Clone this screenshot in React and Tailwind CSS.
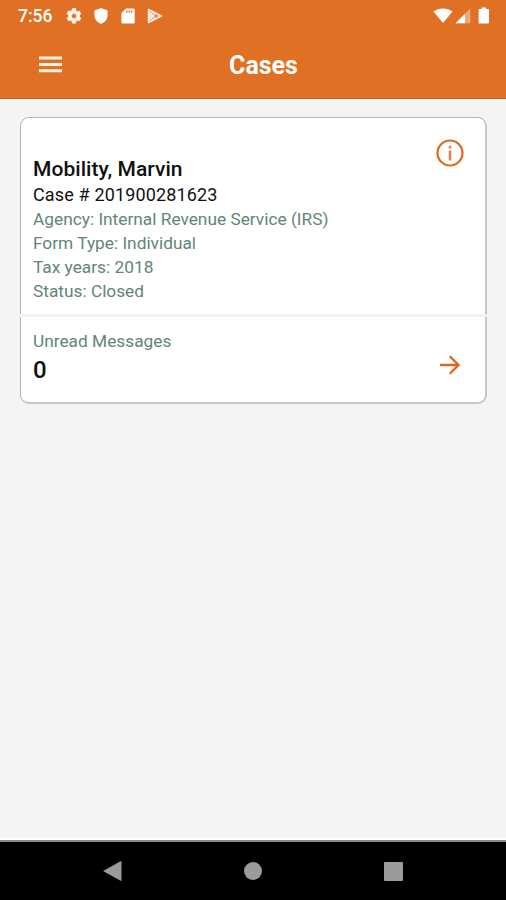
function StatusBar() {
  return (
    <div className="flex h-8 items-center text-white">
      <span className="ml-[18px] w-[47px] text-[17.5px] leading-8 font-medium">7:56</span>
      <svg className="h-[18px] w-[18px]" viewBox="0 0 24 24" fill="#fff5ec" stroke="#fff5ec" strokeWidth=".7">
        <path d="M19.14 12.94c.04-.3.06-.61.06-.94s-.02-.64-.07-.94l2.03-1.58a.49.49 0 0 0 .12-.61l-1.92-3.32a.49.49 0 0 0-.59-.22l-2.39.96c-.5-.38-1.03-.7-1.62-.94l-.36-2.54A.48.48 0 0 0 13.92 2h-3.84c-.24 0-.43.17-.47.41l-.36 2.54c-.59.24-1.13.57-1.62.94l-2.39-.96a.48.48 0 0 0-.59.22L2.74 8.87a.48.48 0 0 0 .12.61l2.03 1.58c-.05.3-.09.63-.09.94s.02.64.07.94l-2.03 1.58a.49.49 0 0 0-.12.61l1.92 3.32c.12.22.37.29.59.22l2.39-.96c.5.38 1.03.7 1.62.94l.36 2.54c.05.24.24.41.48.41h3.84c.24 0 .44-.17.47-.41l.36-2.54c.59-.24 1.13-.56 1.62-.94l2.39.96c.22.08.47 0 .59-.22l1.92-3.32a.48.48 0 0 0-.12-.61zM12 15.4a3.4 3.4 0 1 1 0-6.8 3.4 3.4 0 0 1 0 6.8z" />
      </svg>
      <svg className="ml-[11px] h-4 w-[14px]" viewBox="0 0 14 16" fill="#fff">
        <path d="M7 0L.4 2.6v4.7C.4 11.200 3.200 14.700 7 15.800c3.800-1.100 6.600-4.600 6.600-8.500V2.600z" />
      </svg>
      <svg className="ml-[13px] h-4 w-[14px]" viewBox="0 0 14 16" fill="#fff">
        <path fillRule="evenodd" d="M5 .4h7.200c.9 0 1.500.6 1.500 1.500v12.200c0 .9-.6 1.500-1.500 1.500H1.900c-.9 0-1.500-.6-1.500-1.500V5zM5.200 2.600v2.200h1.300V2.600zm2.400 0v2.200h1.300V2.600zm2.400 0v2.200h1.300V2.600z" />
      </svg>
      <svg className="ml-[12px] h-4 w-4" viewBox="0 0 16 16">
        <path d="M1.300 1L15 8 1.300 15z" fill="#fff" fillOpacity=".8" stroke="#fff" strokeLinejoin="round" />
        <path d="M2.500 2.500L10.500 10M2.500 13.500L10.500 6" stroke="#e88a4c" strokeWidth=".7" fill="none" />
        <path d="M7 8l2.200-1.900L11.400 8l-2.200 1.900z" fill="#e88a4c" />
      </svg>
      <svg className="ml-auto h-4 w-5" viewBox="0 0 20 16" fill="#fff">
        <path d="M.5 3.500C6 -.4 14 -.4 19.500 3.500L10 15z" />
      </svg>
      <svg className="ml-[2px] h-4 w-4" viewBox="0 0 16 16" fill="#fff">
        <path d="M15.300.5v14.700H.5z" fillOpacity=".4" />
        <path d="M10 5.800v9.400H.5z" />
      </svg>
      <svg className="mr-4 ml-[7px] h-[18px] w-3" viewBox="0 0 12 18" fill="#fff">
        <path d="M3.500 .5h4.500v1.600h2c.6 0 1 .4 1 1V15.500c0 .6-.4 1-1 1H1.600c-.6 0-1-.4-1-1V3.100c0-.6.4-1 1-1h1.900z" />
      </svg>
    </div>
  );
}

function Header() {
  return (
    <header className="h-[99px] shrink-0 border-b border-[#cc5d15] bg-[#e07024]">
      <StatusBar />
      <div className="grid h-[66px] grid-cols-3 items-start">
        <svg className="mt-[24px] ml-[39px] h-[17px] w-[23px]" viewBox="0 0 23 17" fill="#fff1e4">
          <path d="M0 .6h23v2.900H0zM0 7h23v2.900H0zM0 13.300h23v2.900H0z" />
        </svg>
        <h1 className="pt-[1px] pl-[21px] text-center text-[25px] leading-[66px] font-bold text-white">Cases</h1>
      </div>
    </header>
  );
}

const details = [
  'Agency: Internal Revenue Service (IRS)',
  'Form Type: Individual',
  'Tax years: 2018',
  'Status: Closed',
];

function CaseCard() {
  return (
    <section className="mt-[17px] mr-[19px] ml-5 h-[287px] rounded-[9px] border border-r-2 border-b-2 border-[#b4b4b4] border-r-[#c6c6c6] border-b-[#c6c6c6] bg-white">
      <div className="flex h-[196px] justify-between pr-[21px] pl-[12px]">
        <div className="pt-[38px]">
          <h2 className="h-[26px] text-[21px] leading-[27px] font-medium tracking-[0.05px] text-[#111]">Mobility, Marvin</h2>
          <p className="h-[25px] text-[18px] leading-[26px] tracking-[0.15px] text-[#111]">Case # 201900281623</p>
          {details.map((line) => (
            <p key={line} className="h-6 text-[17.300px] leading-6 text-[#638578]">{line}</p>
          ))}
        </div>
        <svg className="mt-[21px] h-7 w-7" viewBox="0 0 28 28" fill="none" stroke="#dc6a20">
          <circle cx="14" cy="14" r="12.500" strokeWidth="2.200" />
          <path d="M14 11.500v10M14 6.800v2.700" strokeWidth="2.600" stroke="#e0824a" />
        </svg>
      </div>
      <div className="-mr-[2px] -ml-[1px] h-[3px] bg-[#f2f2f2]" />
      <div className="flex justify-between pr-[25px] pl-[12px]">
        <div className="pt-[12px]">
          <p className="h-6 text-[17.300px] leading-6 text-[#638578]">Unread Messages</p>
          <p className="h-[34px] text-[24px] leading-[34px] font-medium text-[#111]">0</p>
        </div>
        <svg className="mt-[38px] h-5 w-5" viewBox="0 0 20 20" fill="none" stroke="#df671b" strokeWidth="2.300">
          <path d="M0 10h18.500M9.700 1.200l8.800 8.800-8.800 8.800" />
        </svg>
      </div>
    </section>
  );
}

function NavBar() {
  return (
    <nav className="flex h-[60px] shrink-0 items-center border-t-2 border-[#8a8a8a] bg-black">
      <svg className="ml-[103px] h-[22px] w-[19px]" viewBox="0 0 19 22" fill="#9b9b9b">
        <path d="M0 11L18 1q.5 0 .5 1v18q0 1-.5 1z" />
      </svg>
      <div className="ml-[122px] h-[18px] w-[18px] rounded-full bg-[#9b9b9b]" />
      <div className="ml-[122px] h-[19px] w-[19px] rounded-[1px] bg-[#9b9b9b]" />
    </nav>
  );
}

export default function App() {
  return (
    <div className="flex h-[900px] w-[506px] flex-col overflow-hidden bg-[#f4f4f4] font-['Roboto',sans-serif]">
      <Header />
      <main className="flex-1 border-t border-b-2 border-white">
        <CaseCard />
      </main>
      <NavBar />
    </div>
  );
}
